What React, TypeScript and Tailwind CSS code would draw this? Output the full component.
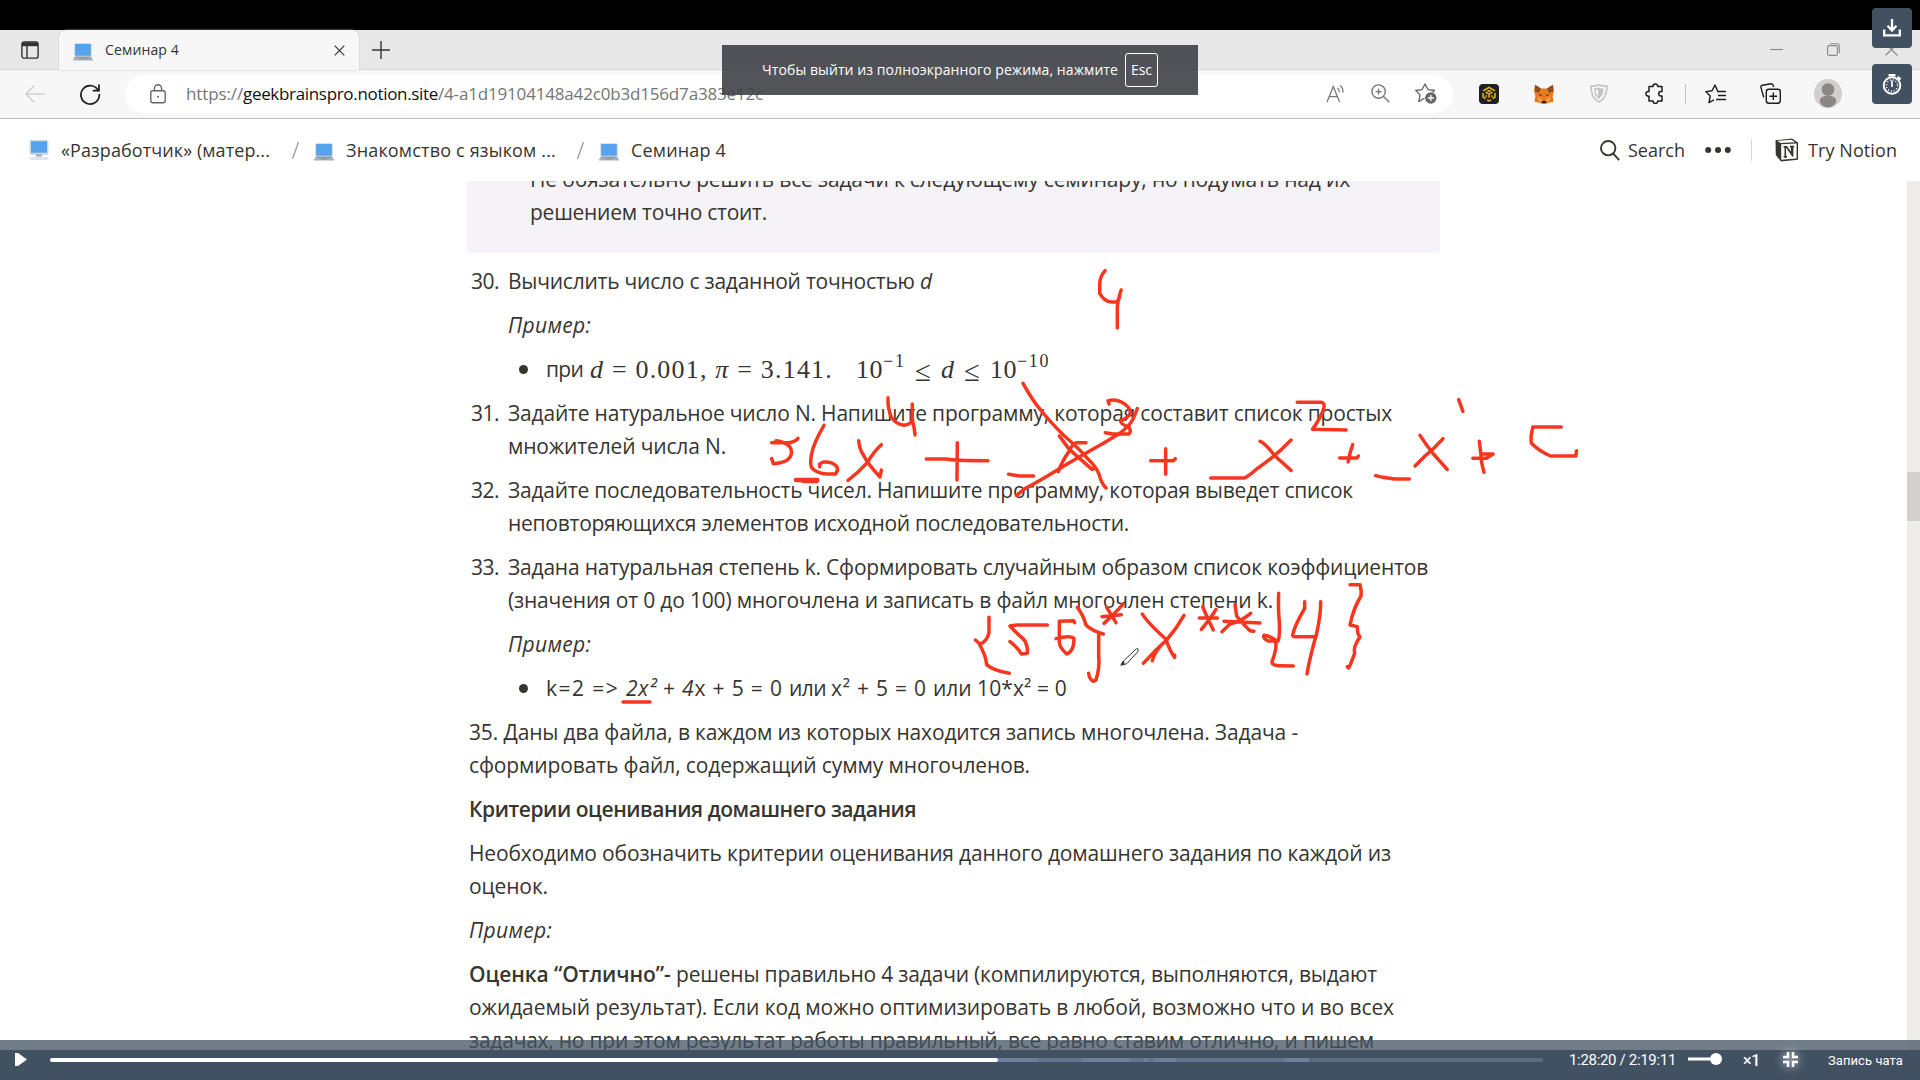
import { useLayoutEffect, useRef } from "react";
import type { ReactNode } from "react";

/* Tracks a run of text out (or in) so that it fills exactly `w` pixels. */
function Fit({ w, className = "", children }: { w: number; className?: string; children: ReactNode }) {
  const ref = useRef<HTMLSpanElement>(null);
  useLayoutEffect(() => {
    const el = ref.current;
    if (!el) return;
    el.style.letterSpacing = "0px";
    const n = (el.textContent || "").length;
    el.style.letterSpacing = (w - el.getBoundingClientRect().width) / n + "px";
  });
  return (
    <span ref={ref} className={"inline-block whitespace-pre " + className}>
      {children}
    </span>
  );
}

const Laptop = ({ className = "" }: { className?: string }) => (
  <svg className={"shrink-0 " + className} width="20" height="18" viewBox="0 0 20 18">
    <rect x="1.5" y="0.5" width="17" height="13" rx="1" fill="#b4c6d6" />
    <rect x="2.3" y="1" width="15.4" height="11.6" fill="#55a3ec" />
    <path d="M1.8 13.5h16.4l1.8 3.2v.8H0v-.8z" fill="#a3b1bd" />
    <path d="M3 14.4h14M6.5 16h7" stroke="#8292a2" strokeWidth="0.9" />
  </svg>
);

const Desktop = () => (
  <svg className="shrink-0" width="20" height="20" viewBox="0 0 20 20">
    <rect x="0.5" y="0" width="19" height="15" rx="1" fill="#ccd8e2" />
    <rect x="2" y="1.3" width="16" height="11.4" fill="#55a3ec" />
    <rect x="7" y="14.5" width="6" height="2" fill="#9aabb9" />
    <rect x="0.5" y="17" width="19" height="3" rx="1" fill="#e1e6ec" />
  </svg>
);

function TabStrip() {
  return (
    <div className="flex h-[40px] bg-[#e8e8e8] border-b border-[#d9d9d9]">
      <div className="flex w-[59px] items-center rounded-br-md pl-[21px]">
        <svg width="18" height="18" viewBox="0 0 18 18" fill="none" stroke="#333" strokeWidth="1.4">
          <rect x="0.9" y="0.9" width="16.2" height="16.2" rx="2.2" />
          <path d="M1 3.2h16" strokeWidth="4" />
          <path d="M6 5v12" />
        </svg>
      </div>
      <div className="flex h-[40px] w-[300px] items-center rounded-t-lg bg-[#f7f7f7] pl-[14px] shadow-[0_0_2px_#bbb]">
        <Laptop className="mt-[3px]" />
        <Fit w={74} className="ml-[12px] text-[14px] leading-5 text-[#333]">Семинар 4</Fit>
        <svg className="ml-[155px]" width="11" height="11" viewBox="0 0 11 11" stroke="#333" strokeWidth="1.2">
          <path d="M.7.7l9.6 9.6M10.3.7L.7 10.3" />
        </svg>
      </div>
      <svg className="ml-[13px] mt-[11px]" width="18" height="18" viewBox="0 0 18 18" stroke="#333" strokeWidth="1.4">
        <path d="M9 0v18M0 9h18" />
      </svg>
      <svg className="ml-[1380px] mt-[13px]" width="13" height="13" viewBox="0 0 13 13" stroke="#888" strokeWidth="1.1">
        <path d="M0 6.5h13" />
      </svg>
      <svg className="ml-[44px] mt-[13px]" width="13" height="13" viewBox="0 0 13 13" fill="none" stroke="#888" strokeWidth="1.1">
        <rect x="0.6" y="2.6" width="9.8" height="9.8" rx="1.5" />
        <path d="M3 .7h7a2.3 2.3 0 0 1 2.3 2.3v7" />
      </svg>
      <svg className="ml-[45px] mt-[13px]" width="13" height="13" viewBox="0 0 13 13" stroke="#888" strokeWidth="1.1">
        <path d="M.5.5l12 12M12.5.5l-12 12" />
      </svg>
    </div>
  );
}

function AddressBar() {
  return (
    <div className="flex h-[49px] items-center border-b border-[#bdbdbd] bg-[#f7f7f7] pb-px pl-[25px]">
      <svg width="20" height="18" viewBox="0 0 20 18" fill="none" stroke="#cfcfcf" strokeWidth="1.5">
        <path d="M20 9H1M9 .8L1 9l8 8.2" />
      </svg>
      <svg className="ml-[34px]" width="22" height="22" viewBox="0 0 22 22" fill="none" stroke="#1b1b1b" strokeWidth="1.7">
        <path d="M19.6 8.2A9.2 9.2 0 1 0 20.3 11" />
        <path d="M20 1.5v6.2h-6.2" />
      </svg>
      <div className="ml-[24px] flex h-[38px] w-[1328px] items-center rounded-full bg-white pl-[25px]">
        <svg width="16" height="20" viewBox="0 0 16 20" fill="none" stroke="#666" strokeWidth="1.4">
          <rect x="0.8" y="6.8" width="14.4" height="12" rx="2" />
          <path d="M4.4 6.8V4.4a3.6 3.6 0 0 1 7.2 0v2.4" />
          <circle cx="8" cy="12.8" r="1" fill="#666" stroke="none" />
        </svg>
        <div className="ml-[20px] flex text-[17px] leading-6 text-[#757575]">
          <Fit w={57}>https://</Fit>
          <Fit w={195} className="text-[#111]">geekbrainspro.notion.site</Fit>
          <Fit w={325}>/4-a1d19104148a42c0b3d156d7a383e12c</Fit>
        </div>
        <svg className="ml-[563px]" width="21" height="19" viewBox="0 0 21 19" fill="none" stroke="#777" strokeWidth="1.3">
          <path d="M1 18L7.3 2.5 13.6 18M3.2 12.6h8.2" />
          <path d="M11.5 3.8q2 1.7 1.8 4.6M14 1.5q3.4 2.6 3 7" />
        </svg>
        <svg className="ml-[24px]" width="19" height="19" viewBox="0 0 19 19" fill="none" stroke="#777" strokeWidth="1.4">
          <circle cx="7.6" cy="7.6" r="6.7" />
          <path d="M12.5 12.5l5.8 5.8M7.6 4.6v6M4.6 7.6h6" />
        </svg>
        <svg className="ml-[25px]" width="22" height="21" viewBox="0 0 22 21" fill="none" stroke="#666" strokeWidth="1.3">
          <path d="M9.5 15l-5.7 3.6 1.3-6.7L.8 7.5l6.2-.9L10 1l3 5.6 6.5.9-2 2" strokeLinejoin="round" />
          <circle cx="15.8" cy="15" r="5.7" fill="#666" stroke="none" />
          <path d="M15.8 12v6M12.8 15h6" stroke="#fff" />
        </svg>
      </div>
      <svg className="ml-[26px]" width="20" height="20" viewBox="0 0 20 20">
        <rect width="20" height="20" rx="4" fill="#1e2026" />
        <g fill="none" stroke="#f0b90b" strokeWidth="1.5">
          <path d="M4 6.800L10 3.400l6 3.400M4 9v4.200l2.500 1.500M16 9v4.200l-2.500 1.500M8 15.800l2 1.200 2-1.200" />
          <path d="M6.500 8.200L10 10.200l3.500-2M10 10.200v3.600M7 11.200v2M13 11.200v2M8.300 6.500l1.700 1 1.700-1" />
        </g>
      </svg>
      <svg className="ml-[35px]" width="20" height="20" viewBox="0 0 20 20">
        <path d="M1 .8l6 3.600h6l6-3.600 1 6.500-1.400 5 1 5.400-5.300 1-2.300 1.400H8l-2.300-1.400-5.300-1 1-5.400L0 7.300z" fill="#e8791f" />
        <path d="M1 .8l6 3.600L4.600 9 .8 7zM19 .8l-6 3.600L15.400 9l3.800-2z" fill="#8a4b22" />
        <path d="M3 13l4 1 1.500 4L5 17zM17 13l-4 1-1.500 4 3.500-1z" fill="#f5a25a" />
        <path d="M5.500 10.500l2 1.200M14.500 10.500l-2 1.200" stroke="#333" strokeWidth="1.200" />
        <path d="M8 17h4v2H8z" fill="#222" />
      </svg>
      <svg className="ml-[36px]" width="18" height="19" viewBox="0 0 18 19" fill="none" stroke="#c4c4c4" strokeWidth="1.700">
        <path d="M9 1Q5 2.200 1 2.200 1 14 9 18 17 14 17 2.200 13 2.200 9 1z" />
        <path d="M9 4.500Q7 5 4.800 5 5 11.500 9 14z" strokeWidth="1.400" />
        <path d="M9 4.500Q11 5 13.200 5 13 11.500 9 14z" fill="#c4c4c4" strokeWidth="1" />
      </svg>
      <svg className="ml-[37px]" width="20" height="21" viewBox="0 0 20 21" fill="none" stroke="#1c1c1c" strokeWidth="1.500" strokeLinejoin="round">
        <path d="M4 3.500h4a2.400 2.400 0 1 1 4.800 0h4.200v5h-1a2.300 2.300 0 0 0 0 4.600h1v5h-4.200a2.400 2.400 0 0 1-4.800 0H4v-5a2.400 2.400 0 1 1 0-4.600z" />
      </svg>
      <div className="ml-[20px] h-[20px] w-px bg-[#c3c3c3]" />
      <svg className="ml-[19px]" width="21" height="20" viewBox="0 0 21 20" fill="none" stroke="#1c1c1c" strokeWidth="1.400" strokeLinejoin="round">
        <path d="M12.500 6.800L10 1 7 6.800.8 7.600 5.200 12 4 18.600l5-2.800M12 7.500h9M13 11.500h8M11 15.500h10" />
      </svg>
      <svg className="ml-[34px]" width="21" height="21" viewBox="0 0 21 21" fill="none" stroke="#1c1c1c" strokeWidth="1.400">
        <rect x="6.300" y="6.300" width="14" height="14" rx="2.500" />
        <path d="M13.300 9.500v7.600M9.500 13.300h7.600M3.800 14.500L1 4.600a2 2 0 0 1 1.400-2.400L11 .8a2 2 0 0 1 2 1.300l.6 1.900" />
      </svg>
      <svg className="ml-[33px]" width="28" height="29" viewBox="0 0 28 29">
        <ellipse cx="14" cy="14.500" rx="14" ry="14.500" fill="#d2d0cf" />
        <circle cx="14" cy="10.500" r="6.300" fill="#8c8785" />
        <path d="M5.800 21.500a8.200 4.800 0 0 1 16.400 0c0 3.500-3.700 6.800-8.200 6.800s-8.200-3.300-8.200-6.800z" fill="#8c8785" />
      </svg>
    </div>
  );
}

function NotionBar() {
  return (
    <div className="flex h-[62px] items-center bg-white pl-[29px] text-[18px] leading-6 text-[#37352f]">
      <Desktop />
      <Fit w={209} className="ml-[12px]">«Разработчик» (матер...</Fit>
      <svg className="ml-[22px]" width="7" height="17" stroke="#9b9a97" strokeWidth="1.300"><path d="M6.500 0L.5 17" /></svg>
      <Laptop className="ml-[15px] mt-[3px]" />
      <Fit w={210} className="ml-[12px]">Знакомство с языком ...</Fit>
      <svg className="ml-[21px]" width="7" height="17" stroke="#9b9a97" strokeWidth="1.300"><path d="M6.500 0L.5 17" /></svg>
      <Laptop className="ml-[15px] mt-[3px]" />
      <Fit w={95} className="ml-[12px]">Семинар 4</Fit>
      <svg className="ml-[874px]" width="20" height="21" viewBox="0 0 20 21" fill="none" stroke="#37352f" strokeWidth="1.900">
        <circle cx="8.200" cy="8.200" r="7.200" />
        <path d="M13.200 13.700l6 6.500" />
      </svg>
      <Fit w={57} className="ml-[8px]">Search</Fit>
      <svg className="ml-[20px]" width="26" height="8" viewBox="0 0 26 8" fill="#37352f">
        <circle cx="3.200" cy="4" r="3" /><circle cx="13" cy="4" r="3" /><circle cx="22.800" cy="4" r="3" />
      </svg>
      <div className="ml-[20px] h-[22px] w-px bg-[#d4d4d2]" />
      <svg className="ml-[23px]" width="24" height="24" viewBox="0 0 24 24">
        <path d="M.5 2.200L17 .5l6 4v17.300L6 23.500.8 17z" fill="#37352f" />
        <path d="M2.300 2.800L16.600 1.700l3.600 2.500L5.400 5z" fill="#fff" />
        <path d="M6.200 6.300l15.400-.9v15.200l-15.400 1.200z" fill="#fff" />
        <path d="M8.500 8.700h3l5.200 7.600V9.200M10.300 9v9.800M8.700 18.900h3.300M15 8.600h4.200M17.600 9v9.500" fill="none" stroke="#37352f" strokeWidth="1.600" />
      </svg>
      <Fit w={89} className="ml-[9px]">Try Notion</Fit>
    </div>
  );
}

const Item = ({ n, children }: { n: string; children: ReactNode }) => (
  <li className="flex">
    <span className="w-[39px] shrink-0 pl-[2px]"><Fit w={28}>{n}</Fit></span>
    <div className="flex flex-col gap-[11px]">{children}</div>
  </li>
);

const Bullet = ({ children }: { children: ReactNode }) => (
  <div className="flex h-[33px] items-center pl-[11px]">
    <span className="mr-[18px] size-[9px] shrink-0 rounded-full bg-[#37352f]" />
    {children}
  </div>
);

const Lines = ({ children }: { children: ReactNode }) => <div className="flex flex-col items-start">{children}</div>;

function Formula() {
  return (
    <div className="flex h-[33px] items-center whitespace-pre pl-[7px] font-['Liberation_Serif',serif] text-[26px] leading-[33px]">
      <Fit w={243}><i>d</i> = 0.001, <i>π</i> = 3.141.</Fit>
      <Fit w={27} className="ml-[23px]">10</Fit>
      <Fit w={23} className="-mt-[17px] text-[18px]">−1</Fit>
      <Fit w={17} className="ml-[9px] mt-[3px] text-[29px]">≤</Fit>
      <Fit w={14} className="ml-[9px] italic">d</Fit>
      <Fit w={17} className="ml-[9px] mt-[3px] text-[29px]">≤</Fit>
      <Fit w={27} className="ml-[9px]">10</Fit>
      <Fit w={33} className="-mt-[17px] text-[18px]">−10</Fit>
    </div>
  );
}

function Article() {
  return (
    <main className="ml-[467px] w-[973px] text-[21px] leading-[33px] text-[#37352f]">
      <div className="flex h-[72px] flex-col items-start justify-end overflow-hidden rounded-b-[4px] bg-[#f5f3f8] pb-[24px] pl-[63px]">
        <Fit w={820}>Не обязательно решить все задачи к следующему семинару, но подумать над их</Fit>
        <Fit w={237}>решением точно стоит.</Fit>
      </div>
      <div className="flex flex-col gap-[11px] pl-[2px] pt-[12px]">
        <ol className="flex flex-col gap-[11px]">
          <Item n="30.">
            <div><Fit w={412}>Вычислить число с заданной точностью </Fit><i>d</i></div>
            <i><Fit w={83}>Пример:</Fit></i>
            <Bullet><Fit w={37}>при</Fit><Formula /></Bullet>
          </Item>
          <Item n="31.">
            <Lines>
              <Fit w={884}>Задайте натуральное число N. Напишите программу, которая составит список простых</Fit>
              <Fit w={218}>множителей числа N.</Fit>
            </Lines>
          </Item>
          <Item n="32.">
            <Lines>
              <Fit w={845}>Задайте последовательность чисел. Напишите программу, которая выведет список</Fit>
              <Fit w={621}>неповторяющихся элементов исходной последовательности.</Fit>
            </Lines>
          </Item>
          <Item n="33.">
            <Lines>
              <Fit w={920}>Задана натуральная степень k. Сформировать случайным образом список коэффициентов</Fit>
              <Fit w={765}>(значения от 0 до 100) многочлена и записать в файл многочлен степени k.</Fit>
            </Lines>
            <i><Fit w={83}>Пример:</Fit></i>
            <Bullet>
              <Fit w={80}>{"k=2 => "}</Fit>
              <Fit w={37} className="italic">{"2x² "}</Fit>
              <Fit w={19}>+ </Fit>
              <Fit w={107}><i>4</i>{"x + 5 = 0 "}</Fit>
              <Fit w={42}>{"или "}</Fit>
              <Fit w={102}>{"x² + 5 = 0 "}</Fit>
              <Fit w={44}>{"или "}</Fit>
              <Fit w={90}>10*x² = 0</Fit>
            </Bullet>
          </Item>
        </ol>
        <Lines>
          <Fit w={829}>35. Даны два файла, в каждом из которых находится запись многочлена. Задача -</Fit>
          <Fit w={561}>сформировать файл, содержащий сумму многочленов.</Fit>
        </Lines>
        <h2 className="font-semibold"><Fit w={447}>Критерии оценивания домашнего задания</Fit></h2>
        <Lines>
          <Fit w={922}>Необходимо обозначить критерии оценивания данного домашнего задания по каждой из</Fit>
          <Fit w={79}>оценок.</Fit>
        </Lines>
        <i><Fit w={83}>Пример:</Fit></i>
        <Lines>
          <div><Fit w={207} className="font-semibold">Оценка “Отлично”- </Fit><Fit w={701}>решены правильно 4 задачи (компилируются, выполняются, выдают</Fit></div>
          <Fit w={925}>ожидаемый результат). Если код можно оптимизировать в любой, возможно что и во всех</Fit>
          <Fit w={905}>задачах, но при этом результат работы правильный, все равно ставим отлично, и пишем</Fit>
        </Lines>
      </div>
    </main>
  );
}

/* Freehand marker strokes drawn over the page. */
function Ink() {
  return (
    <svg
      className="pointer-events-none absolute inset-0 fill-none stroke-[#f8361f] stroke-[3.500px] [&_path]:[vector-effect:non-scaling-stroke]"
      width="1920" height="1080" viewBox="0 0 1920 1080" strokeLinecap="round" strokeLinejoin="round"
    >
      <g transform="translate(750 380) scale(0.33333)">
        <path d="M65 188H115Q135 186 144 175M78 182Q100 184 118 198Q130 215 120 232Q108 250 70 251L65 236" />
        <path d="M222 136Q190 190 184 225Q178 262 190 268Q208 282 235 282H256Q268 268 258 257Q245 244 220 246L209 252V260" />
        <path d="M138 300H202M160 303H200" className="stroke-[4.500px]" />
        <path d="M326 182Q328 208 340 224Q352 250 390 291L394 270M394 194Q370 216 352 248Q325 278 294 301" />
        <path d="M414 53Q413 90 425 113Q438 133 462 136Q486 132 487 118V72M487 72V120Q494 145 495 165" />
        <path d="M622 188L621 300M529 237H590Q610 242 714 242" />
        <path d="M776 283L808 288H851" />
        <path d="M819 10Q850 65 872 90Q900 125 940 165Q990 208 1012 235Q1040 262 1048 285Q1053 308 1068 324" />
        <path d="M928 168L958 208L1026 268L1036 264" />
        <path d="M800 346L825 326Q870 302 922 270Q980 235 1060 190L1105 163Q1140 138 1150 115Q1157 98 1162 86" />
        <path d="M1008 188H980Q966 192 960 210Q935 245 925 275" />
        <path d="M1077 72L1074 63Q1092 56 1114 66Q1138 78 1142 98Q1135 113 1112 122Q1112 134 1136 140Q1146 155 1136 162H1088L1066 158" />
        <path d="M1247 206V283M1202 242H1270L1276 236" />
      </g>
      <g transform="translate(1050 240) scale(0.38267 0.33333)">
        <path d="M144 92Q130 110 130 132V160Q142 186 162 186H174Q182 180 182 165L186 150M186 150Q176 185 176 205V264" />
        <path d="M420 714H508Q520 708 540 687Q588 650 630 600M549 604Q563 610 588 648L630 691" />
        <path d="M646 487H708Q718 488 716 502Q712 525 686 568L774 570" />
        <path d="M791 614Q784 635 779 666M757 654H802L806 648" />
        <path d="M851 707L870 712L900 717H939" />
        <path d="M967 586Q985 618 1002 642L1038 688M1027 596Q1005 625 980 648L954 678" />
        <path d="M1068 479L1079 514" />
        <path d="M1122 604Q1126 640 1128 668L1134 697M1105 655H1140L1158 642H1132" />
        <path d="M1336 561H1262Q1255 590 1258 610Q1280 635 1308 648H1374L1376 632" />
      </g>
      <g transform="translate(920 560) scale(0.33333)">
        <path d="M207 172V218Q200 246 180 252L166 240M178 252Q198 288 200 314Q220 332 268 340" />
        <path d="M382 195H290L270 198Q285 215 300 228Q325 245 322 280L304 282Q295 264 270 245" />
        <path d="M464 188L461 182L418 184V240Q414 258 440 282Q462 275 462 235Q450 225 408 236" />
        <path d="M472 142Q490 165 498 195Q515 212 550 222M536 225V290Q540 320 528 360L520 364Q508 358 506 340" />
        <path d="M608 134Q585 160 552 190M560 142L588 188M546 170L604 164" />
        <path d="M667 162Q680 185 738 238Q750 275 764 292V285M792 166Q770 205 740 240L704 274L670 310M740 240Q705 270 697 302" />
        <path d="M888 148Q872 175 844 208M848 140Q860 170 880 210M838 174H892" />
        <path d="M912 184L1020 189M945 134L950 168Q972 196 990 212L1002 214M992 160Q960 186 930 192L906 215" />
        <path d="M1076 100Q1074 150 1078 185Q1080 230 1074 243H1045Q1028 235 1032 226Q1050 228 1066 240Q1072 260 1058 300Q1050 316 1076 317L1120 318" />
        <path d="M1154 125V145Q1125 195 1120 218Q1114 230 1126 230H1186L1190 225M1202 125Q1203 160 1190 220Q1170 290 1161 342" />
        <path d="M1290 74H1320Q1325 95 1323 108Q1300 145 1290 195L1312 200Q1312 225 1320 230Q1298 262 1304 280Q1290 318 1286 324L1282 320" />
      </g>
      <path d="M623 702H650" />
      <g className="stroke-[1px]" stroke="#333">
        <path d="M1124 660.500l11-10.500q2-2.500 3-1t-1 3.500l-10 11-4 1.500z" className="fill-white stroke-[#333]" />
        <path d="M1121 665l2-3.500 1 1.500z" className="fill-[#222] stroke-[#222]" />
      </g>
    </svg>
  );
}

function FullscreenHint() {
  return (
    <div className="absolute left-[722px] top-[45px] flex h-[50px] w-[476px] items-center bg-[#3f4147]/90 pb-px pl-[40px] text-[14px] text-white">
      <Fit w={356}>Чтобы выйти из полноэкранного режима, нажмите</Fit>
      <span className="ml-[7px] flex h-[34px] w-[33px] items-center justify-center rounded-[3px] border border-white"><Fit w={21}>Esc</Fit></span>
    </div>
  );
}

function SideButtons() {
  return (
    <div className="absolute left-[1872px] top-[8px] flex w-[40px] flex-col gap-[16px]">
      <div className="flex h-[40px] items-center justify-center rounded-[4px] bg-[#425161]">
        <svg width="18" height="18" viewBox="0 0 18 18" fill="none" stroke="#fff">
          <path d="M1.200 10.500v5.800h15.600v-5.800" strokeWidth="2.300" />
          <path d="M9 0v11M4.600 6.800L9 11.500l4.400-4.700" strokeWidth="2.300" />
        </svg>
      </div>
      <div className="flex h-[40px] items-center justify-center rounded-[4px] bg-[#425161]">
        <svg width="20" height="21" viewBox="0 0 20 21" fill="none" stroke="#fff">
          <circle cx="10" cy="11.500" r="8.300" strokeWidth="2" />
          <circle cx="10" cy="11.500" r="5.600" strokeWidth="1.600" strokeDasharray="1 1.930" />
          <path d="M10 13V6.500" strokeWidth="1.700" />
          <path d="M6.500 1.200h7M15.500 3l3 2.500" strokeWidth="2.400" />
        </svg>
      </div>
    </div>
  );
}

function Player() {
  return (
    <div className="absolute inset-x-0 bottom-0 font-[Roboto,sans-serif] text-white">
      <div className="h-[10px] bg-[#425161]/75" />
      <div className="flex h-[30px] items-start bg-[#425161] pl-[15px]">
        <svg className="mt-[3px]" width="12" height="13" viewBox="0 0 12 13" fill="#fff"><path d="M0 0l3 0 9 6.500L3 13H0z" /></svg>
        <div className="ml-[23px] mt-[8px] flex h-[4px] w-[1493px] overflow-hidden rounded-sm bg-[#5a6b82]">
          <div className="w-[948px] rounded-r-sm bg-white" />
          <div className="w-[40px] bg-[#6b7f9e]" />
          <div className="w-[44px] bg-[#62748f]" />
          <div className="w-[48px] bg-[#6b7f9e]" />
          <div className="w-[14px] bg-[#62748f]" />
          <div className="w-[4px] bg-[#6b7f9e]" />
          <div className="w-[6px] bg-[#62748f]" />
          <div className="w-[22px] bg-[#6b7f9e]" />
          <div className="w-[109px] bg-[#62748f]" />
          <div className="w-[24px] bg-[#6b7f9e]" />
        </div>
        <Fit w={107} className="ml-[26px] text-[15px] leading-[20px]">1:28:20 / 2:19:11</Fit>
        <svg className="ml-[12px] mt-[3px]" width="34" height="12" viewBox="0 0 34 12" fill="#fff">
          <rect y="4.500" width="26" height="3" /><circle cx="28" cy="6" r="6" />
        </svg>
        <Fit w={17} className="ml-[21px] text-[16px] font-medium leading-[21px]">×1</Fit>
        <svg className="ml-[23px] mt-[2px] drop-shadow-[0_0_5px_#dfe8ef]" width="15" height="15" viewBox="0 0 15 15" fill="none" stroke="#fff" strokeWidth="2.500">
          <path d="M5 0v5H0M10 0v5h5M5 15v-5H0M10 15v-5h5" />
        </svg>
        <Fit w={75} className="ml-[30px] text-[13px] leading-[21px]">Запись чата</Fit>
      </div>
    </div>
  );
}

export default function App() {
  return (
    <div className="relative h-[1080px] w-[1920px] overflow-hidden bg-white font-['Open_Sans','Noto_Sans',sans-serif]">
      <div className="h-[30px] bg-black" />
      <TabStrip />
      <AddressBar />
      <NotionBar />
      <div className="flex h-[899px] justify-between overflow-hidden">
        <Article />
        <div className="w-[13px] bg-[#edece8] pt-[291px]">
          <div className="h-[49px] bg-[#d1d0cb]" />
        </div>
      </div>
      <Ink />
      <FullscreenHint />
      <SideButtons />
      <Player />
    </div>
  );
}
